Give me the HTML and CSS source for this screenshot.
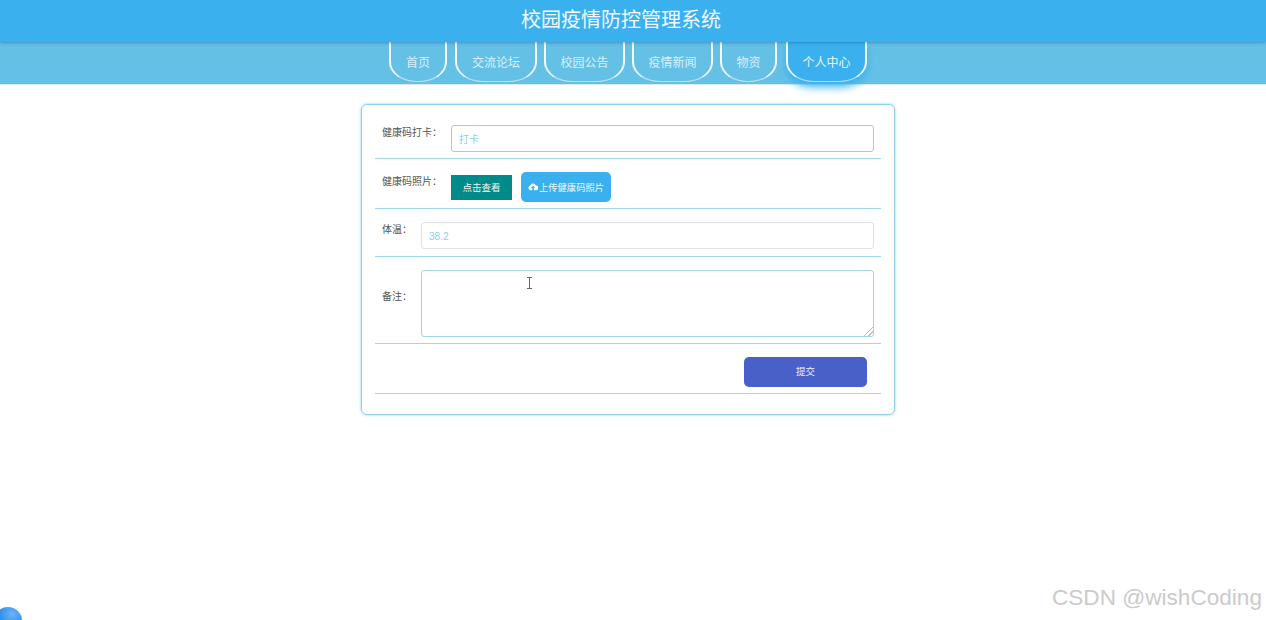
FILE: index.html
```html
<!DOCTYPE html>
<html lang="zh-CN">
<head>
	<meta charset="utf-8">
	<title>校园疫情防控管理系统</title>
	<link rel="stylesheet" href="styles.css">
</head>
<body>
<div class="top-title">校园疫情防控管理系统</div>
<div class="nav">
	<a class="nav-item w58 gap8">首页</a>
	<a class="nav-item w82">交流论坛</a>
	<a class="nav-item w81">校园公告</a>
	<a class="nav-item w81">疫情新闻</a>
	<a class="nav-item w57 gap9">物资</a>
	<a class="nav-item w81 active">个人中心</a>
</div>

<!--health form-->
<div class="card">
	<div class="row h41">
		<label class="lbl lbl-long">健康码打卡：</label>
		<input class="text-input hi" type="text" placeholder="打卡">
	</div>
	<div class="row h50">
		<label class="lbl lbl-long lbl-photo">健康码照片：</label>
		<button class="btn-view">点击查看</button>
		<button class="btn-upload">
			<svg class="cloud" viewBox="0 0 12 10" width="10" height="9"><path d="M3 9.500A2.800 2.800 0 0 1 2.600 4 3.600 3.600 0 0 1 9.500 3.700 2.900 2.900 0 0 1 9.500 9.500H7V6.800H8.600L6 4 3.400 6.800H5V9.500Z" fill="#fff"/></svg>上传健康码照片
		</button>
	</div>
	<div class="row h48">
		<label class="lbl lbl-short">体温：</label>
		<input class="text-input plain" type="text" value="38.2">
	</div>
	<div class="row h87">
		<label class="lbl lbl-short lbl-mid">备注：</label>
		<textarea class="area"></textarea>
	</div>
	<div class="row h50 row-end">
		<button class="btn-submit">提交</button>
	</div>
</div>

<svg class="ibeam" width="7" height="12" viewBox="0 0 7 12"><path d="M1 .5H6M3.500 .5V11.500M1 11.500H6" stroke="#666" stroke-width="1" fill="none"/></svg>
<div class="bubble"></div>
<div class="mark">CSDN @wishCoding</div>
</body>
</html>
```
FILE: styles.css
```css
html, body {
	margin: 0;
	padding: 0;
	height: 620px;
	overflow: hidden;
	background: #fff;
	font-family: "Noto Sans CJK SC", "Liberation Sans", sans-serif;
}
.top-title {
	height: 42px;
	line-height: 38px;
	padding-right: 24px;
	text-align: center;
	font-size: 20px;
	color: #f2faff;
	background: #3ab1ee;
	box-shadow: 0 1px 3px rgba(20, 90, 140, .45);
	position: relative;
}
.nav {
	height: 43px;
	box-sizing: border-box;
	border-bottom: 1px solid #d5ecf6;
	background: #65c0e6;
	display: flex;
	justify-content: center;
	gap: 7px;
	padding-right: 10px;
}
.nav-item {
	box-sizing: border-box;
	height: 40px;
	line-height: 40px;
	text-align: center;
	font-size: 12px;
	color: #d9f0fa;
	border: 2px solid #f4fbfe;
	border-top: 0;
	border-bottom: 1px solid rgba(255, 255, 255, .55);
	border-radius: 0 0 28px 28px / 0 0 20px 20px;
}
.w58 { width: 58px; }
.w82 { width: 82px; }
.w81 { width: 81px; }
.w57 { width: 57px; }
.gap8 { margin-right: 1px; }
.gap9 { margin-right: 2px; }
.active {
	background: #3ab1ee;
	box-shadow: 0 5px 8px #3ab1ee;
	color: #eaf7fd;
}
.card {
	box-sizing: border-box;
	width: 534px;
	height: 311px;
	margin: 19px 0 0 361px;
	padding: 13px 13px 0 13px;
	border: 1px solid #8fd0ea;
	border-radius: 6px;
	box-shadow: 0 0 3px #8fd0ea;
}
.row {
	box-sizing: border-box;
	display: flex;
	align-items: flex-start;
	padding: 0 7px;
	border-bottom: 1px solid #9fd7ec;
}
.h41 { height: 41px; padding-top: 7px; }
.h50 { height: 50px; padding-top: 13px; }
.h48 { height: 48px; padding-top: 13px; }
.h87 { height: 87px; padding-top: 13px; }
.lbl {
	font-size: 10px;
	line-height: 14px;
	color: #555;
	white-space: nowrap;
}
.lbl-long { width: 69px; }
.lbl-short { width: 39px; }
.lbl-photo { margin-top: 2px; }
.lbl-mid { margin-top: 19px; }
.text-input {
	box-sizing: border-box;
	height: 27px;
	width: 423px;
	padding: 1px 7px 0;
	border: 1px solid #92d2e4;
	border-radius: 3px;
	font-family: "Liberation Sans", "Noto Sans CJK SC", sans-serif;
	font-size: 10px;
	color: #8fcdf0;
	outline: none;
}
.text-input::placeholder { color: #8fcdf0; }
.plain {
	width: 453px;
	border-color: #dde3e6;
}
.area {
	box-sizing: border-box;
	width: 453px;
	height: 67px;
	border: 1px solid #a0d6e6;
	border-radius: 3px;
	outline: none;
}
.area::-webkit-resizer {
	background: linear-gradient(135deg, transparent 0 68%, #b9c4c8 68% 73%, transparent 73% 83%, #b9c4c8 83% 88%, transparent 88%);
}
.btn-view {
	width: 61px;
	height: 25px;
	margin: 3px 9px 0 0;
	padding: 0 0 2px;
	border: 0;
	background: #008b8b;
	color: #eef9f9;
	font-family: inherit;
	font-size: 9.500px;
}
.btn-upload {
	width: 90px;
	height: 30px;
	padding: 0 0 1px;
	border: 0;
	border-radius: 5px;
	background: #3ab1ee;
	color: #eef9fe;
	font-family: inherit;
	font-size: 9.300px;
	display: flex;
	align-items: center;
	justify-content: center;
	gap: 1px;
}
.row-end {
	justify-content: flex-end;
	padding-right: 14px;
}
.btn-submit {
	width: 123px;
	height: 30px;
	padding: 0 0 2px;
	border: 0;
	border-radius: 5px;
	background: #4a60c9;
	color: #eef0fa;
	font-family: inherit;
	font-size: 9.500px;
}
.ibeam {
	position: absolute;
	left: 526px;
	top: 277px;
}
.bubble {
	position: absolute;
	left: -6px;
	top: 607px;
	width: 28px;
	height: 28px;
	border-radius: 50%;
	background: radial-gradient(circle at 65% 25%, #6fb4f5 0, #2f8ff0 45%);
}
.mark {
	position: absolute;
	right: 4px;
	top: 585px;
	font-family: "Liberation Sans", sans-serif;
	font-size: 22.600px;
	color: #cbcbcb;
	white-space: nowrap;
}
```
